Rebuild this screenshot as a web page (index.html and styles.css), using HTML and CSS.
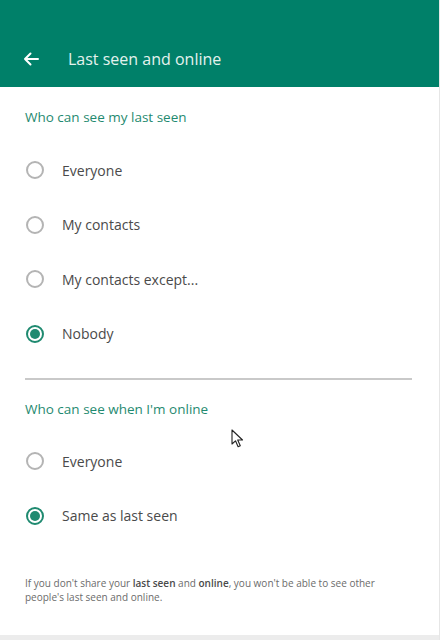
FILE: index.html
```html
<!DOCTYPE html>
<html>
<head>
<meta charset="utf-8">
<link rel="stylesheet" href="styles.css">
</head>
<body>
<div class="app">
  <header class="header">
    <svg class="back" width="16" height="14" viewBox="0 0 16 14"><path d="M15 7H2M7.5 1.5L2 7l5.5 5.5" fill="none" stroke="#fff" stroke-width="2" stroke-linecap="round" stroke-linejoin="round"/></svg>
    <span class="title">Last seen and online</span>
  </header>
  <main class="content">
    <section class="section">
      <h2 class="section-title">Who can see my last seen</h2>
      <div class="options">
        <div class="option"><span class="radio"></span><span class="label">Everyone</span></div>
        <div class="option"><span class="radio"></span><span class="label">My contacts</span></div>
        <div class="option"><span class="radio"></span><span class="label">My contacts except...</span></div>
        <div class="option"><span class="radio checked"></span><span class="label">Nobody</span></div>
      </div>
    </section>
    <hr class="divider">
    <section class="section second">
      <h2 class="section-title">Who can see when I'm online</h2>
      <div class="options">
        <div class="option"><span class="radio"></span><span class="label">Everyone</span></div>
        <div class="option"><span class="radio checked"></span><span class="label">Same as last seen</span></div>
      </div>
    </section>
    <p class="note">If you don't share your <b>last seen</b> and <b>online</b>, you won't be able to see other people's last seen and online.</p>
  </main>
  <div class="bottom"></div>
  <svg class="cursor" width="14" height="20" viewBox="0 0 14 20"><path d="M1 1v14l3.5-3.2 2.6 6 2.2-1-2.6-5.8H11.5z" fill="#fff" stroke="#222" stroke-width="1.1" stroke-linejoin="round"/></svg>
</div>
</body>
</html>
```
FILE: styles.css
```css
* { box-sizing: border-box; }
html, body { margin: 0; padding: 0; }
body {
  width: 440px;
  height: 640px;
  overflow: hidden;
  background: #fff;
  font-family: "Open Sans", "Noto Sans", sans-serif;
}
.app {
  position: relative;
  width: 440px;
  height: 640px;
  display: flex;
  flex-direction: column;
  border-right: 1px solid #e6e6e6;
}
.header {
  height: 87px;
  background: #008069;
  display: flex;
  align-items: flex-end;
  padding: 0 0 18px 23px;
  flex-shrink: 0;
}
.back { margin-bottom: 3px; }
.title {
  color: #e4f2ee;
  font-size: 16px;
  margin-left: 29px;
  line-height: 20px;
}
.content {
  flex: 1;
  padding: 0 27px 0 25px;
}
.section-title {
  margin: 0;
  font-weight: 400;
  font-size: 13.5px;
  color: #1f8a70;
  line-height: 20px;
  padding-top: 20px;
}
.options {
  display: flex;
  flex-direction: column;
  padding-top: 16px;
}
.option {
  height: 54.5px;
  display: flex;
  align-items: center;
}
.radio {
  width: 18px;
  height: 18px;
  border: 2px solid #b4b4b4;
  border-radius: 50%;
  margin-left: 1px;
  display: flex;
  align-items: center;
  justify-content: center;
}
.radio.checked {
  border-color: #1f8a70;
}
.radio.checked::after {
  content: "";
  width: 10px;
  height: 10px;
  border-radius: 50%;
  background: #1f8a70;
}
.label {
  margin-left: 18px;
  font-size: 14px;
  color: #4a4a4a;
}
.divider {
  border: 0;
  height: 2px;
  background: #c9c9c9;
  margin: 17px 0 0 0;
}
.second .section-title { padding-top: 19px; }
.second .options { padding-top: 15px; }
.note {
  margin: 33px 0 0 0;
  font-size: 10px;
  line-height: 14px;
  color: #6b6b6b;
}
.note b { color: #4a4a4a; font-weight: 600; }
.bottom {
  height: 5px;
  background: #ececec;
  flex-shrink: 0;
}
.cursor {
  position: absolute;
  left: 231px;
  top: 429px;
}
```
